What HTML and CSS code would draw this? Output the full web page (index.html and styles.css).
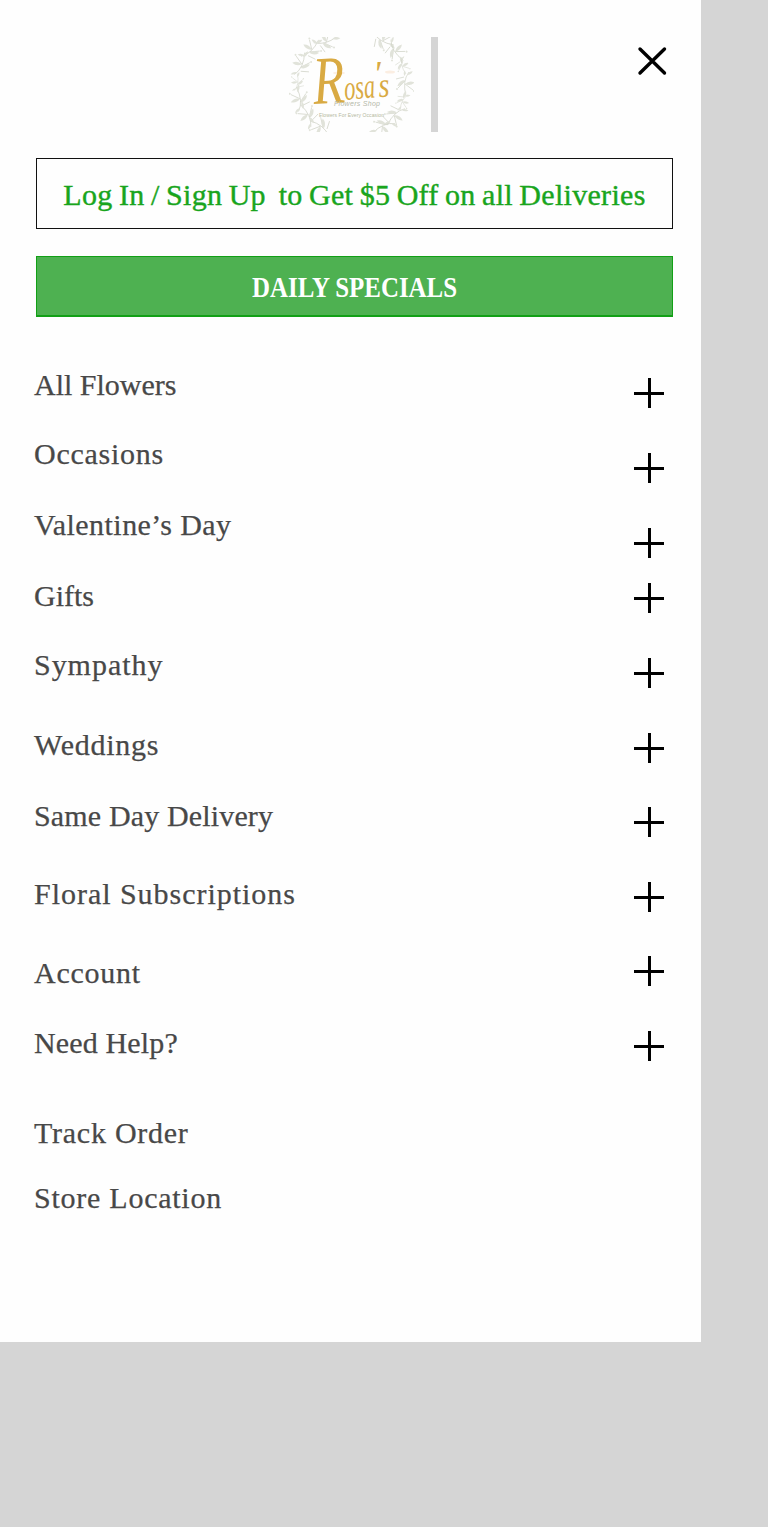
FILE: index.html
```html
<!DOCTYPE html>
<html lang="en">
<head>
<meta charset="utf-8">
<title>Rosa's Flowers Shop</title>
<link rel="stylesheet" href="styles.css">
</head>
<body>
<main class="drawer">
  <header class="header">
    <svg class="logo" width="125" height="95" viewBox="0 0 125 95" role="img" aria-label="Rosa's Flowers Shop">
      <defs>
        <g id="leaf"><path d="M0 0Q3-5 9-4Q6 1 0 0Z"/></g>
        <g id="sprig">
          <path class="stem" d="M-3 12Q4 3 0-12M1 3L8-4M1 0L-7-6M2 7L10 5"/>
          <use href="#leaf" transform="translate(1 4) rotate(-15)"/>
          <use href="#leaf" transform="translate(1 0) rotate(195)"/>
          <use href="#leaf" transform="translate(0 -7) rotate(-45) scale(.8)"/>
          <use href="#leaf" transform="translate(-1 9) rotate(170) scale(.7)"/>
          <circle cx="9" cy="-5" r="1"/><circle cx="-8" cy="-7" r="1"/>
        </g>
      </defs>
      <g class="wreath">
        <use href="#sprig" transform="translate(37 4) rotate(68)"/>
        <use href="#sprig" transform="translate(22 12) rotate(40)"/>
        <use href="#sprig" transform="translate(12 27) rotate(18)"/>
        <use href="#sprig" transform="translate(8 45) rotate(2) scale(.7)"/>
        <use href="#sprig" transform="translate(10 62) rotate(-12)"/>
        <use href="#sprig" transform="translate(18 78) rotate(-32)"/>
        <use href="#sprig" transform="translate(31 90) rotate(-58)"/>
        <use href="#sprig" transform="translate(94 3) rotate(115)"/>
        <use href="#sprig" transform="translate(107 14) rotate(142)"/>
        <use href="#sprig" transform="translate(114 29) rotate(160) scale(.7)"/>
        <use href="#sprig" transform="translate(117 47) rotate(180)"/>
        <use href="#sprig" transform="translate(114 65) rotate(200) scale(.7)"/>
        <use href="#sprig" transform="translate(106 79) rotate(220)"/>
        <use href="#sprig" transform="translate(94 90) rotate(240)"/>
      </g>
      <g class="blush"><ellipse cx="50" cy="36" rx="6" ry="1.5"/><ellipse cx="101" cy="35" rx="5" ry="1.5"/></g>
      <g class="logo-name">
        <text class="logo-initial" transform="translate(25 67) rotate(-3) scale(.76 1)">R</text>
        <text transform="translate(56 63) rotate(-5)" textLength="31" lengthAdjust="spacingAndGlyphs">osa</text>
        <text x="84" y="49">'</text>
        <text transform="translate(90 60) rotate(-3) scale(.8 1)">s</text>
      </g>
      <text class="logo-sub" x="45" y="69" textLength="46">Flowers Shop</text>
      <text class="logo-tag" x="30" y="80" textLength="65">Flowers For Every Occasion</text>
    </svg>
    <span class="divider"></span>
    <svg class="close" width="30" height="30" viewBox="0 0 30 30" role="img" aria-label="Close"><path d="M3 3L27.500 27M27.500 3L3 27"/></svg>
  </header>
  <a class="login"><span>Log In / Sign Up&nbsp; to Get $5 Off on all Deliveries</span></a>
  <a class="specials"><span class="specials-label">DAILY SPECIALS</span></a>
  <nav class="menu">
    <ul class="labels">
      <li>All Flowers</li>
      <li class="open">Occasions</li>
      <li class="mid">Valentine’s Day</li>
      <li>Gifts</li>
      <li class="wide">Sympathy</li>
      <li class="open">Weddings</li>
      <li class="snug">Same Day Delivery</li>
      <li class="wide">Floral Subscriptions</li>
      <li class="open">Account</li>
      <li class="snug">Need Help?</li>
      <li class="open">Track Order</li>
      <li class="open">Store Location</li>
    </ul>
    <div class="toggles">
      <i class="plus"></i><i class="plus"></i><i class="plus"></i><i class="plus"></i><i class="plus"></i>
      <i class="plus"></i><i class="plus"></i><i class="plus"></i><i class="plus"></i><i class="plus"></i>
    </div>
  </nav>
</main>
</body>
</html>
```
FILE: styles.css
```css
* { box-sizing: border-box; }
body {
  margin: 0;
  min-height: 1527px;
  background: #d5d5d5;
  font-family: "Liberation Serif", "Times New Roman", serif;
  font-size: 30px;
  color: #484848;
}
.drawer {
  width: 701px;
  height: 1342px;
  padding: 37px 28px 0 36px;
  background: #fefefe;
}
.header { display: flex; height: 95px; padding-left: 253px; }
.logo { display: block; }
.divider { width: 7px; height: 95px; margin-left: 17px; background: #d5d5d5; }
.close { margin: 9px 6px 0 auto; fill: none; stroke: #000; stroke-width: 3.4; stroke-linecap: round; }
.wreath { fill: #e1e3da; }
.wreath circle { fill: #cbcdbf; }
.stem { fill: none; stroke: #cfd2c6; stroke-width: .7; }
.blush { fill: #fbeee2; }
.logo-name { font-size: 35px; font-style: italic; fill: #d9aa43; }
.logo-initial { font-size: 68px; }
.logo-sub { font: italic 7px "Liberation Sans", sans-serif; fill: #b4b8a8; }
.logo-tag { font: 5px "Liberation Sans", sans-serif; fill: #b4b8a0; }
.login, .specials {
  display: flex;
  align-items: center;
  justify-content: center;
  width: 637px;
  white-space: nowrap;
}
.login {
  height: 71px;
  margin-top: 26px;
  padding-top: 3px;
  border: 1.5px solid #111;
  color: #19a51d;
  letter-spacing: .3px;
  word-spacing: -1.4px;
  -webkit-text-stroke: .4px #19a51d;
}
.specials {
  height: 61px;
  margin-top: 27px;
  padding-top: 1px;
  border: 1px solid #12a016;
  border-bottom-width: 2px;
  background: #4eb151;
  color: #fff;
  font-weight: bold;
}
.specials-label { transform: scaleX(.83); }
.menu { display: flex; justify-content: space-between; margin-left: -2px; }
.labels {
  display: grid;
  grid-template-rows: 69px 71px 71px 69px 80px 71px 78px 79px 70px 90px 65px 40px;
  margin: 48px 0 0;
  padding: 0;
  list-style: none;
  line-height: 40px;
  white-space: nowrap;
  -webkit-text-stroke: .25px #484848;
}
.snug { letter-spacing: .15px; }
.mid { letter-spacing: .45px; }
.open { letter-spacing: .75px; }
.wide { letter-spacing: .97px; }
.toggles {
  display: grid;
  grid-template-rows: 75px 75px 55px 75px 75px 74px 75px 74px 75px 30px;
  align-content: start;
  margin: 61px 9px 0 0;
}
.plus {
  width: 30px;
  height: 30px;
  background:
    linear-gradient(#000, #000) center / 30px 3px no-repeat,
    linear-gradient(#000, #000) center / 3px 30px no-repeat;
}
```
